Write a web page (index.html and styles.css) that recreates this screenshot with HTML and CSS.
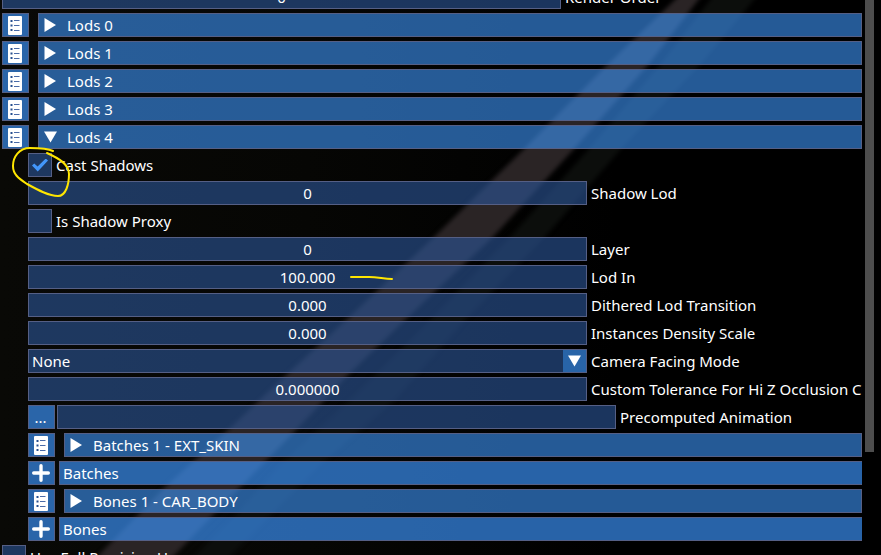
FILE: index.html
```
<!DOCTYPE html>
<html lang="en">
<head>
    <meta charset="UTF-8">
    <title>Model Editor</title>
    <link rel="stylesheet" href="styles.css">
</head>
<body>

<!-- shared icons -->
<svg class="sprite" aria-hidden="true">
    <symbol id="icon-list" viewBox="0 0 14 19">
        <rect width="14" height="19" rx="1" fill="#fff"/>
        <path d="M2.5 5h2M2.5 9.5h2M2.5 14h2" stroke="#28508f" stroke-width="2"/>
        <path d="M6 4.5h5.5M6 9.5h5.5M6 14.5h5.5" stroke="#4a6ba8" stroke-width="1"/>
    </symbol>
    <symbol id="icon-plus" viewBox="0 0 16 16">
        <path d="M8 1.5v13M1.5 8h13" stroke="#fff" stroke-width="3" stroke-linecap="round"/>
    </symbol>
    <symbol id="icon-right" viewBox="0 0 12 14">
        <path d="M0 0L11.5 7L0 14z" fill="#fff"/>
    </symbol>
    <symbol id="icon-down" viewBox="0 0 14 12">
        <path d="M0 0h14L7 12z" fill="#fff"/>
    </symbol>
</svg>

<!-- light streaks of the viewport behind the panel -->
<svg class="viewport" viewBox="0 0 881 555" preserveAspectRatio="none" aria-hidden="true">
    <defs>
        <linearGradient id="fade" x1="0" x2="1" y1="0" y2="0">
            <stop offset="0" stop-color="#090906"/>
            <stop offset="0.35" stop-color="#060604"/>
            <stop offset="0.7" stop-color="#000"/>
        </linearGradient>
        <filter id="soft" color-interpolation-filters="sRGB"><feGaussianBlur stdDeviation="2"/></filter>
    </defs>
    <rect width="881" height="555" fill="url(#fade)"/>
    <g filter="url(#soft)">
        <path d="M680 -5L702 -5L648 65L573 150L493 237L405 320L348 375L297 429L212 516L168 562L92 562L165 487L229 429L284 377L346 320L434 237L523 150L607 65z" fill="#2a2425"/>
        <path d="M714 -5L758 -5L700 65L620 150L545 237L465 320L395 400L320 465L270 516L225 562L188 562L235 516L280 465L355 395L430 320L510 237L588 150L660 65z" fill="#0c0e0c"/>
    </g>
</svg>

<main class="window">
    <div class="panel">
        <div class="row">
            <input class="field" type="text" id="renderOrder" value="0">
            <label for="renderOrder">Render Order</label>
        </div>
        <div class="row node">
            <button class="tool" aria-label="Lods 0 menu"><svg class="list"><use href="#icon-list"/></svg></button>
            <button class="header"><svg class="arrow"><use href="#icon-right"/></svg>Lods 0</button>
        </div>
        <div class="row node">
            <button class="tool" aria-label="Lods 1 menu"><svg class="list"><use href="#icon-list"/></svg></button>
            <button class="header"><svg class="arrow"><use href="#icon-right"/></svg>Lods 1</button>
        </div>
        <div class="row node">
            <button class="tool" aria-label="Lods 2 menu"><svg class="list"><use href="#icon-list"/></svg></button>
            <button class="header"><svg class="arrow"><use href="#icon-right"/></svg>Lods 2</button>
        </div>
        <div class="row node">
            <button class="tool" aria-label="Lods 3 menu"><svg class="list"><use href="#icon-list"/></svg></button>
            <button class="header"><svg class="arrow"><use href="#icon-right"/></svg>Lods 3</button>
        </div>
        <div class="row node">
            <button class="tool" aria-label="Lods 4 menu"><svg class="list"><use href="#icon-list"/></svg></button>
            <button class="header" aria-expanded="true"><svg class="arrow"><use href="#icon-down"/></svg>Lods 4</button>
        </div>

        <div class="group">
            <div class="row">
                <input class="check" type="checkbox" id="castShadows" checked>
                <label for="castShadows">Cast Shadows</label>
            </div>
            <div class="row">
                <input class="field" type="text" id="shadowLod" value="0">
                <label for="shadowLod">Shadow Lod</label>
            </div>
            <div class="row">
                <input class="check" type="checkbox" id="shadowProxy">
                <label for="shadowProxy">Is Shadow Proxy</label>
            </div>
            <div class="row">
                <input class="field" type="text" id="layer" value="0">
                <label for="layer">Layer</label>
            </div>
            <div class="row">
                <input class="field" type="text" id="lodIn" value="100.000">
                <label for="lodIn">Lod In</label>
            </div>
            <div class="row">
                <input class="field" type="text" id="dithered" value="0.000">
                <label for="dithered">Dithered Lod Transition</label>
            </div>
            <div class="row">
                <input class="field" type="text" id="density" value="0.000">
                <label for="density">Instances Density Scale</label>
            </div>
            <div class="row">
                <div class="combo">
                    <select id="facing">
                        <option>None</option>
                    </select>
                    <span class="combo-arrow"><svg class="arrow"><use href="#icon-down"/></svg></span>
                </div>
                <label for="facing">Camera Facing Mode</label>
            </div>
            <div class="row">
                <input class="field" type="text" id="tolerance" value="0.000000">
                <label for="tolerance">Custom Tolerance For Hi Z Occlusion Culling</label>
            </div>
            <div class="row browse">
                <button class="tool" aria-label="Browse">...</button>
                <input class="field" type="text" id="animation" value="">
                <label for="animation">Precomputed Animation</label>
            </div>
            <div class="row node">
                <button class="tool" aria-label="Batches 1 menu"><svg class="list"><use href="#icon-list"/></svg></button>
                <button class="header"><svg class="arrow"><use href="#icon-right"/></svg>Batches 1 - EXT_SKIN</button>
            </div>
            <div class="row">
                <button class="tool" aria-label="Add batch"><svg class="plus"><use href="#icon-plus"/></svg></button>
                <button class="bar">Batches</button>
            </div>
            <div class="row node">
                <button class="tool" aria-label="Bones 1 menu"><svg class="list"><use href="#icon-list"/></svg></button>
                <button class="header"><svg class="arrow"><use href="#icon-right"/></svg>Bones 1 - CAR_BODY</button>
            </div>
            <div class="row">
                <button class="tool" aria-label="Add bone"><svg class="plus"><use href="#icon-plus"/></svg></button>
                <button class="bar">Bones</button>
            </div>
        </div>

        <div class="row">
            <input class="check" type="checkbox" id="precision">
            <label for="precision">Use Full Precision Uvs</label>
        </div>
    </div>
    <div class="scrollbar"><div class="thumb"></div></div>
</main>

<!-- pen marks -->
<svg class="marks" width="420" height="300" viewBox="0 0 420 300" aria-hidden="true">
    <path d="M53 151C47 148 39 148 30 148C19 148 13 157 13 166C13 174 18 178 27 184C38 190 49 196 58 196C66 196 69 184 69 174C69 164 58 158 47 153"/>
    <path d="M351 277H369C378 277 384 279 392 279"/>
</svg>

</body>
</html>
```
FILE: styles.css
```
:root {
    --item-width: calc((100vw - 21px) * 0.65);
    --border: #555f85;
    --frame: rgba(44, 86, 152, 0.62);
    --header: rgba(62, 150, 250, 0.6);
    --button: rgba(60, 148, 250, 0.67);
}

* {
    box-sizing: border-box;
}

body {
    margin: 0;
    height: 100vh;
    overflow: hidden;
    background: #000;
    color: #fff;
    font-family: "Noto Sans", sans-serif;
    font-size: 15px;
    line-height: 22px;
}

button,
input,
select {
    margin: 0;
    font: inherit;
    color: inherit;
    border: 1px solid var(--border);
    border-radius: 0;
}

.sprite {
    display: none;
}

.viewport {
    position: absolute;
    z-index: -1;
    width: 100%;
    height: 100%;
}

.window {
    display: flex;
    height: 100%;
    padding: 0 7px 0 2px;
    gap: 3px;
}

/* the list is scrolled part of the way through its first row */
.panel {
    flex: 1;
    min-width: 0;
    height: calc(100% + 30px);
    margin-top: -15px;
    overflow: hidden;
}

.group {
    padding-left: 26px;
}

.row {
    display: flex;
    gap: 4px;
    height: 24px;
    margin-bottom: 4px;
    white-space: nowrap;
}

.row label {
    line-height: 24px;
}

.row.node {
    gap: 9px;
}

.row.browse .field {
    margin-left: -2px;
}

.field,
.combo {
    flex: none;
    width: var(--item-width);
    background: var(--frame);
}

.field {
    padding: 0 3px;
    text-align: center;
}

.check {
    appearance: none;
    flex: none;
    display: grid;
    place-items: center;
    width: 24px;
    height: 24px;
    background: var(--frame);
}

.check:checked::before {
    content: "";
    width: 16px;
    height: 13px;
    background: #4296fa;
    clip-path: polygon(0 53%, 14% 38%, 35% 62%, 86% 0, 100% 16%, 36% 100%);
}

.combo {
    display: grid;
    border: 1px solid var(--border);
}

.combo select,
.combo-arrow {
    grid-area: 1 / 1;
}

.combo select {
    appearance: none;
    padding: 0 3px;
    border: none;
    background: none;
}

.combo-arrow {
    display: grid;
    place-items: center;
    justify-self: end;
    width: 23px;
    background: #2864a8;
    pointer-events: none;
}

.tool {
    flex: none;
    display: grid;
    place-items: center;
    width: 27px;
    padding: 0 2px 0 0;
    background: var(--button);
}

.header,
.bar {
    flex: 1;
    display: flex;
    align-items: center;
    padding: 0 3px;
    text-align: left;
}

.header {
    gap: 10px;
    padding: 0 5px;
    background: var(--header);
}

.bar {
    border-right: none;
    background: var(--button);
}

.arrow {
    width: 13px;
    height: 14px;
}

.list {
    width: 14px;
    height: 19px;
}

.plus {
    width: 18px;
    height: 18px;
}

.scrollbar {
    width: 9px;
}

.thumb {
    height: 81.5%;
    background: #4d4d4d;
}

.marks {
    position: absolute;
    top: 0;
    left: 0;
    fill: none;
    stroke: #ffe600;
    stroke-width: 2;
    stroke-linecap: round;
    pointer-events: none;
}
```
